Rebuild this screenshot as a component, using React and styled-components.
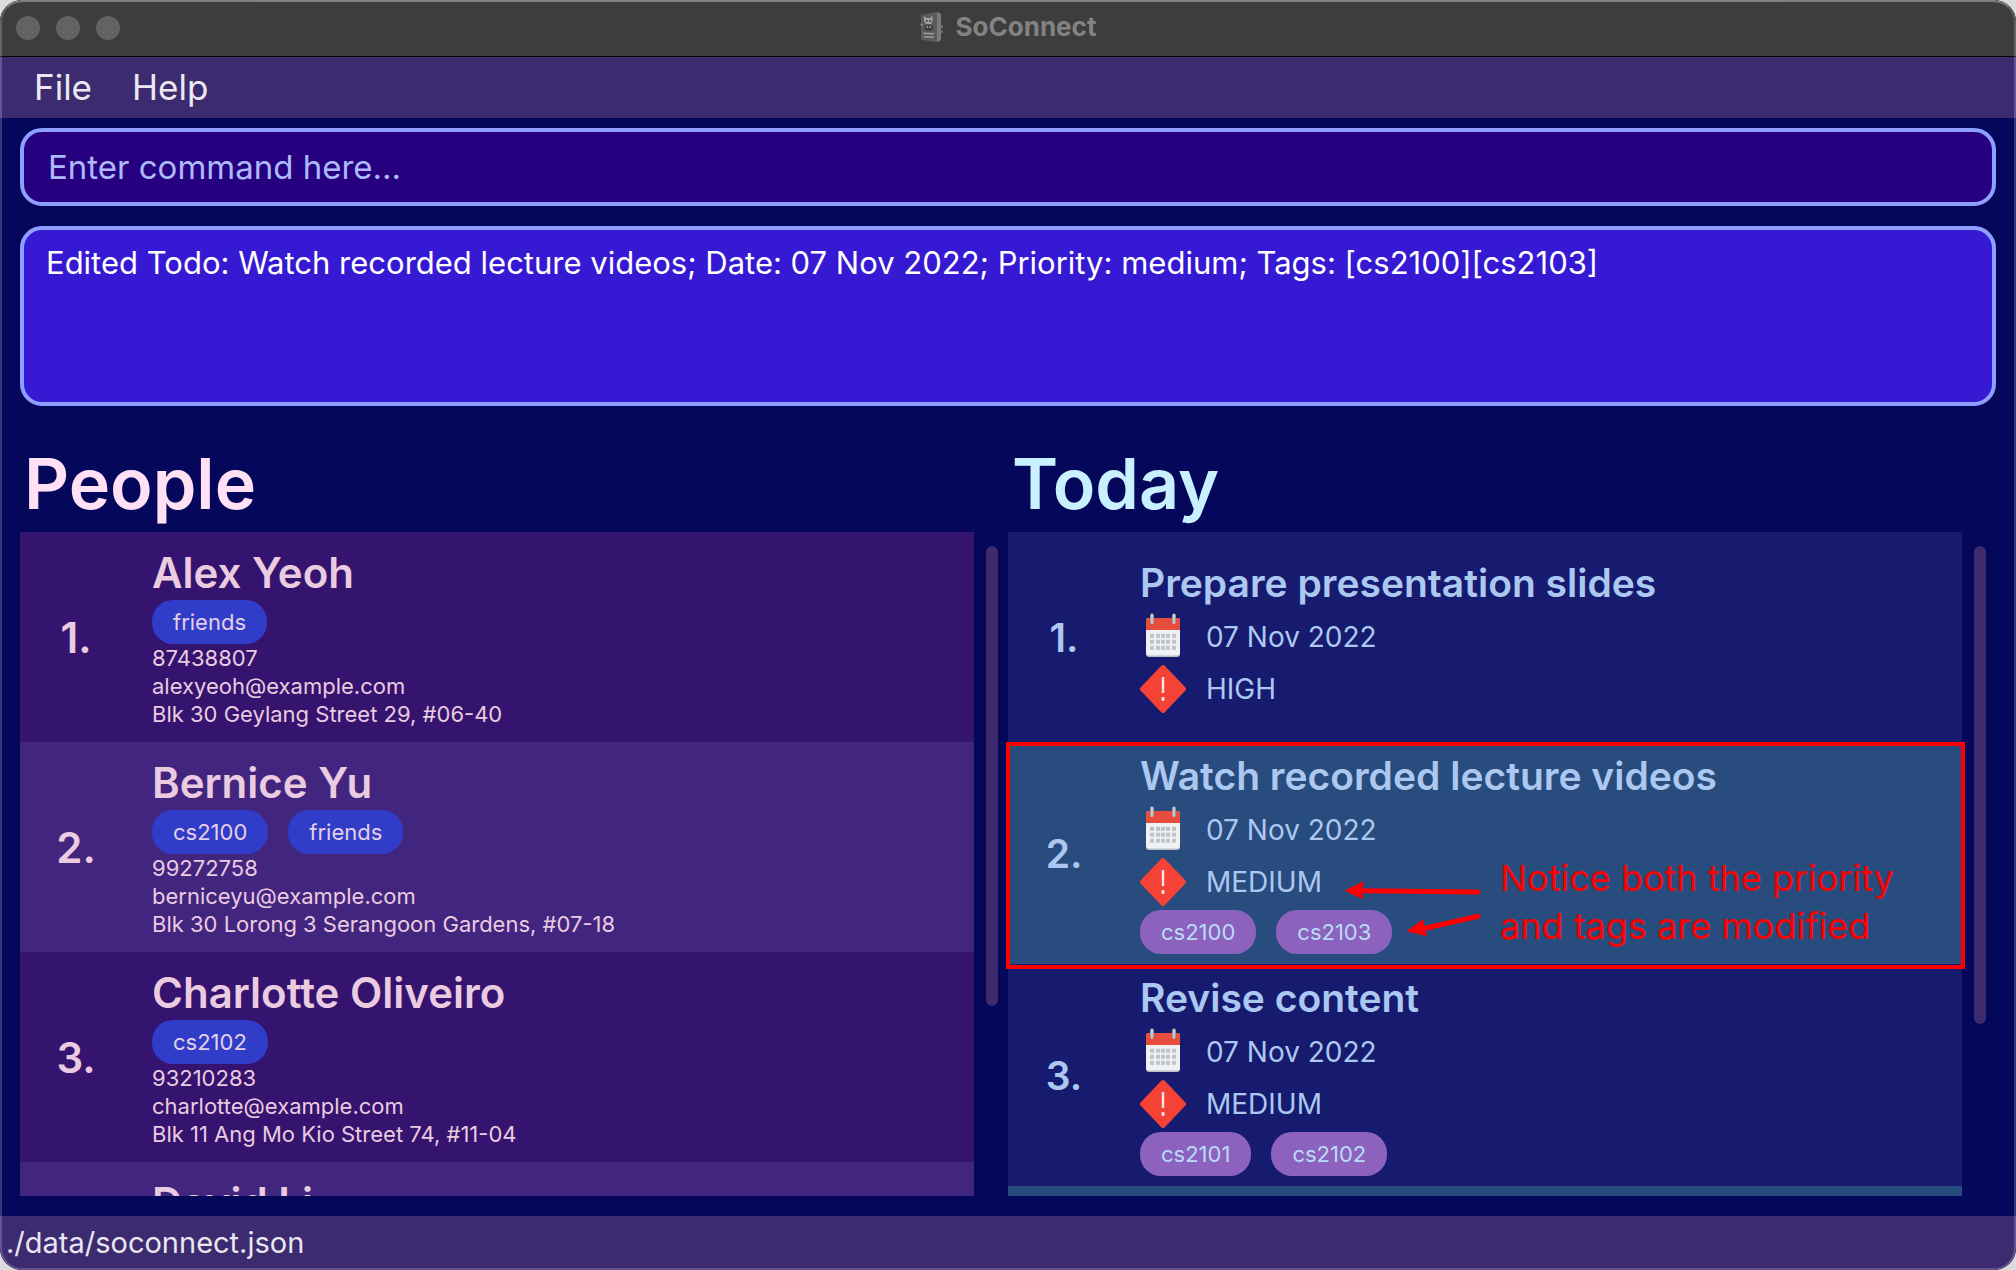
import React from 'react';
import styled, { createGlobalStyle } from 'styled-components';

const color = {
  night: '#04075a',
  bar: '#3c2b6e',
  titleBar: '#3d3d3d',
  edge: '#8f9fff',
  annotation: '#ff0000',
};

const themes = {
  people: {
    heading: '#ffe0f5',
    text: '#ebcbe0',
    odd: '#34146e',
    even: '#42257f',
    tag: '#303dc8',
    tagText: '#e6cfe8',
    titleSize: '42px',
  },
  tasks: {
    heading: '#c9f0ff',
    text: '#acc8f0',
    odd: '#161b70',
    even: '#284c7e',
    tag: '#8c62be',
    tagText: '#b8dcf6',
    titleSize: '39px',
  },
};

const GlobalStyle = createGlobalStyle`
  *, *::before, *::after { box-sizing: border-box; }
  body {
    margin: 0;
    overflow: hidden;
    background: #dcdcdc;
    font-family: Inter, "Liberation Sans", sans-serif;
  }
  button, input, textarea { font-family: inherit; }
`;

const Window = styled.div`
  position: relative;
  display: flex;
  flex-direction: column;
  height: 100vh;
  overflow: hidden;
  border-radius: 22px;
  background: ${color.night};

  &::after {
    content: '';
    position: absolute;
    inset: 0;
    border: 2px solid rgba(255, 255, 255, 0.2);
    border-top-color: rgba(255, 255, 255, 0.35);
    border-radius: 22px;
    pointer-events: none;
  }
`;

const TitleBar = styled.header`
  display: grid;
  grid-template-columns: 1fr auto 1fr;
  align-items: center;
  flex: none;
  height: 57px;
  padding: 0 16px;
  background: ${color.titleBar};
  border-bottom: 1px solid #000;
`;

const Lights = styled.div`
  display: flex;
  gap: 16px;
`;

const Light = styled.button`
  width: 24px;
  height: 24px;
  padding: 0;
  border: 0;
  border-radius: 50%;
  background: #636363;
`;

const AppName = styled.h1`
  display: flex;
  align-items: center;
  gap: 12px;
  margin: 0;
  padding-bottom: 2px;
  color: #838383;
  font-size: 26px;
  font-weight: 700;
  line-height: 32px;
`;

const MenuBar = styled.nav`
  display: flex;
  flex: none;
  height: 61px;
  padding-left: 14px;
  background: ${color.bar};
`;

const MenuItem = styled.button`
  padding: 0 20px 2px;
  border: 0;
  background: none;
  color: #ebe8f2;
  font-size: 35px;
`;

const Fields = styled.section`
  display: flex;
  flex-direction: column;
  flex: none;
  gap: 20px;
  padding: 10px 20px 0;
`;

const CommandInput = styled.input`
  width: 100%;
  height: 78px;
  padding: 0 24px;
  border: 4px solid ${color.edge};
  border-radius: 22px;
  outline: 0;
  background: #26007f;
  color: #fff;
  font-size: 33px;

  &::placeholder {
    color: #adb9fb;
    opacity: 1;
  }
`;

const ResultBox = styled.textarea`
  display: block;
  width: 100%;
  height: 180px;
  padding: 12px 22px;
  border: 4px solid ${color.edge};
  border-radius: 22px;
  outline: 0;
  resize: none;
  background: #3519d3;
  color: #fff;
  font-size: 31px;
  line-height: 42px;
`;

const Panels = styled.main`
  display: grid;
  grid-template-columns: 1fr 1fr;
  grid-template-rows: minmax(0, 1fr);
  flex: 1;
  gap: 10px;
  min-height: 0;
  padding: 38px 30px 20px 20px;
`;

const Panel = styled.section`
  display: flex;
  flex-direction: column;
  min-height: 0;
`;

const PanelHeading = styled.h2`
  flex: none;
  margin: 0;
  padding: 0 4px 8px;
  color: ${(p) => p.$theme.heading};
  font-size: 70px;
  font-weight: 600;
  line-height: 80px;
`;

const PanelBody = styled.div`
  display: flex;
  flex: 1;
  gap: 12px;
  min-height: 0;
`;

const List = styled.ol`
  flex: 1;
  min-width: 0;
  margin: 0;
  padding: 0;
  list-style: none;
  clip-path: inset(0 -8px 0 -8px);
`;

const ScrollTrack = styled.div`
  width: 12px;
  padding-top: 14px;
`;

const ScrollThumb = styled.div`
  height: ${(p) => p.$size};
  border-radius: 6px;
  background: ${color.bar};
`;

const Row = styled.li`
  position: relative;
  z-index: ${(p) => (p.$raised ? 1 : 0)};
  display: flex;
  align-items: ${(p) => (p.$top ? 'flex-start' : 'center')};
  min-height: 210px;
  background: ${(p) => p.$theme.odd};
  color: ${(p) => p.$theme.text};

  &:nth-child(even) {
    background: ${(p) => p.$theme.even};
  }
`;

const Index = styled.span`
  flex: none;
  width: 132px;
  padding-right: 20px;
  font-size: ${(p) => p.$theme.titleSize};
  font-weight: 600;
  text-align: center;
`;

const PersonInfo = styled.div`
  padding: 14px 0;
`;

const PersonName = styled.h3`
  margin: 0;
  font-size: 42px;
  font-weight: 600;
  line-height: 54px;
`;

const Detail = styled.p`
  margin: 0;
  font-size: 22px;
  line-height: 28px;
`;

const TaskInfo = styled.div`
  padding: 10px 0;
`;

const TaskTitle = styled.h3`
  margin: 0 0 4px;
  font-size: 39px;
  font-weight: 600;
  line-height: 48px;
`;

const Fact = styled.p`
  display: flex;
  align-items: center;
  gap: 20px;
  height: 52px;
  margin: 0;
  font-size: 28px;
`;

const Tags = styled.div`
  display: flex;
  gap: 20px;
  margin-top: ${(p) => (p.$spaced ? '2px' : '0')};
`;

const Tag = styled.span`
  height: 44px;
  padding: 0 21px;
  border-radius: 21px;
  background: ${(p) => p.$theme.tag};
  color: ${(p) => p.$theme.tagText};
  font-size: 22px;
  line-height: 44px;
`;

const Frame = styled.div`
  position: absolute;
  inset: 0 -3px -5px -2px;
  border: 4px solid ${color.annotation};
  pointer-events: none;
`;

const Arrows = styled.svg`
  position: absolute;
  top: 130px;
  left: 330px;
`;

const Note = styled.p`
  position: absolute;
  top: 112px;
  left: 492px;
  margin: 0;
  color: ${color.annotation};
  font-size: 36px;
  line-height: 48px;
  white-space: nowrap;
`;

const StatusBar = styled.footer`
  flex: none;
  height: 54px;
  padding-left: 6px;
  background: ${color.bar};
  color: #e9e7f3;
  font-size: 29px;
  line-height: 54px;
`;

function BookIcon() {
  return (
    <svg width="24" height="32" viewBox="0 0 24 32" aria-hidden="true">
      <path d="M1 4 L17 1 L21 3 V29 L17 31 L1 29 Z" fill="#5b5b5b" />
      <path d="M17 1 L21 3 V29 L17 31 Z" fill="#7a7a7a" />
      <path d="M21 14 h2 v3 h-2 Z M21 19 h2 v3 h-2 Z" fill="#666" />
      <path d="M4 5 L6.500 7 H10 L12.500 4.500 V10 L11 13 H6 L4 10.500 Z" fill="#a0a0a0" />
      <path d="M6 9 h1.500 v2 H6 Z M9.500 9 H11 v2 H9.500 Z" fill="#3b3b3b" />
      <path d="M5 14 h7 l1.500 3 -2 3 H6 l-2 -3 Z" fill="#404040" />
      <path d="M6.500 15 h1.500 v2 H6.500 Z M9.500 15 H11 v2 H9.500 Z M1 12 l2 2 -1 1 -1.500 -1 Z" fill="#949494" />
      <path d="M3 21.500 L14 22 V23.500 L3 23 Z M4 25 L14 25.500 V27 L4 26.500 Z" fill="#9a9a9a" />
    </svg>
  );
}

function CalendarIcon() {
  return (
    <svg width="46" height="48" viewBox="0 0 46 48" aria-hidden="true">
      <defs>
        <linearGradient id="ring" x1="0" x2="1">
          <stop offset="0" stopColor="#8d8f92" />
          <stop offset="0.5" stopColor="#d9dadc" />
          <stop offset="1" stopColor="#85878a" />
        </linearGradient>
      </defs>
      <rect x="6" y="6" width="34" height="38" rx="3" fill="#b9bec6" />
      <rect x="6" y="5" width="34" height="37.500" rx="3" fill="#eff1f3" />
      <path d="M6 17 V8 a3 3 0 0 1 3 -3 H37 a3 3 0 0 1 3 3 V17 Z" fill="#e74c3c" />
      {[22.8, 28.8, 34.8].map((y) =>
        [12, 18, 23, 28, 34].map((x) => (
          <rect key={`${x}-${y}`} x={x - 2} y={y - 2} width="4" height="4" fill="#c0c4c9" />
        ))
      )}
      <rect x="10" y="0.500" width="4" height="10.500" rx="2" fill="url(#ring)" />
      <rect x="32" y="0.500" width="4" height="10.500" rx="2" fill="url(#ring)" />
    </svg>
  );
}

function PriorityIcon() {
  return (
    <svg width="46" height="48" viewBox="0 0 46 48" aria-hidden="true">
      <path d="M21.500 0.600 Q23 -0.600 24.500 0.600 L45.500 22.500 Q46.500 24 45.500 25.500 L24.500 47.400 Q23 48.600 21.500 47.400 L0.500 25.500 Q-0.500 24 0.500 22.500 Z" fill="#f44336" />
      <rect x="21.800" y="12" width="2.400" height="16" fill="#ffe4e0" />
      <rect x="21.500" y="32" width="3" height="4" rx="1" fill="#ffe4e0" />
    </svg>
  );
}

function Annotation() {
  return (
    <>
      <Frame />
      <Arrows width="150" height="74" viewBox="0 0 150 74" aria-hidden="true">
        <g fill={color.annotation} stroke={color.annotation}>
          <path d="M22 18.800 L140 20" strokeWidth="5" strokeLinecap="round" />
          <path d="M7.500 18.500 L25.500 10 L23 18.800 L25 26.700 Z" strokeWidth="1" />
          <path d="M86 56.500 L140 44.300" strokeWidth="5" strokeLinecap="round" />
          <path d="M69.500 59 L85 48 L86 56.500 L88.500 63.700 Z" strokeWidth="1" />
        </g>
      </Arrows>
      <Note>
        Notice both the priority
        <br />
        and tags are modified
      </Note>
    </>
  );
}

const people = [
  {
    name: 'Alex Yeoh',
    tags: ['friends'],
    details: ['87438807', 'alexyeoh@example.com', 'Blk 30 Geylang Street 29, #06-40'],
  },
  {
    name: 'Bernice Yu',
    tags: ['cs2100', 'friends'],
    details: ['99272758', 'berniceyu@example.com', 'Blk 30 Lorong 3 Serangoon Gardens, #07-18'],
  },
  {
    name: 'Charlotte Oliveiro',
    tags: ['cs2102'],
    details: ['93210283', 'charlotte@example.com', 'Blk 11 Ang Mo Kio Street 74, #11-04'],
  },
];

const tasks = [
  { title: 'Prepare presentation slides', date: '07 Nov 2022', priority: 'HIGH', tags: [] },
  {
    title: 'Watch recorded lecture videos',
    date: '07 Nov 2022',
    priority: 'MEDIUM',
    tags: ['cs2100', 'cs2103'],
    annotated: true,
  },
  { title: 'Revise content', date: '07 Nov 2022', priority: 'MEDIUM', tags: ['cs2101', 'cs2102'] },
];

function TagList({ tags, theme, spaced }) {
  return (
    <Tags $spaced={spaced}>
      {tags.map((tag) => (
        <Tag key={tag} $theme={theme}>
          {tag}
        </Tag>
      ))}
    </Tags>
  );
}

function ListPanel({ title, theme, thumb, children }) {
  return (
    <Panel>
      <PanelHeading $theme={theme}>{title}</PanelHeading>
      <PanelBody>
        <List>{children}</List>
        <ScrollTrack aria-hidden="true">
          <ScrollThumb $size={thumb} />
        </ScrollTrack>
      </PanelBody>
    </Panel>
  );
}

export default function App() {
  return (
    <>
      <GlobalStyle />
      <Window>
        <TitleBar>
          <Lights>
            <Light aria-label="Close" />
            <Light aria-label="Minimise" />
            <Light aria-label="Zoom" />
          </Lights>
          <AppName>
            <BookIcon />
            SoConnect
          </AppName>
        </TitleBar>
        <MenuBar>
          <MenuItem>File</MenuItem>
          <MenuItem>Help</MenuItem>
        </MenuBar>
        <Fields>
          <CommandInput type="text" aria-label="Command" placeholder="Enter command here..." />
          <ResultBox
            readOnly
            aria-label="Result"
            value="Edited Todo: Watch recorded lecture videos; Date: 07 Nov 2022; Priority: medium; Tags: [cs2100][cs2103]"
          />
        </Fields>
        <Panels>
          <ListPanel title="People" theme={themes.people} thumb="460px">
            {people.map((person, i) => (
              <Row key={person.name} $theme={themes.people}>
                <Index $theme={themes.people}>{i + 1}.</Index>
                <PersonInfo>
                  <PersonName>{person.name}</PersonName>
                  <TagList tags={person.tags} theme={themes.people} />
                  {person.details.map((line) => (
                    <Detail key={line}>{line}</Detail>
                  ))}
                </PersonInfo>
              </Row>
            ))}
            <Row $theme={themes.people} $top>
              <Index $theme={themes.people} />
              <PersonInfo>
                <PersonName>David Li</PersonName>
              </PersonInfo>
            </Row>
          </ListPanel>
          <ListPanel title="Today" theme={themes.tasks} thumb="478px">
            {tasks.map((task, i) => (
              <Row key={task.title} $theme={themes.tasks} $raised={task.annotated}>
                <Index $theme={themes.tasks}>{i + 1}.</Index>
                <TaskInfo>
                  <TaskTitle>{task.title}</TaskTitle>
                  <Fact>
                    <CalendarIcon />
                    {task.date}
                  </Fact>
                  <Fact>
                    <PriorityIcon />
                    {task.priority}
                  </Fact>
                  {task.tags.length > 0 && <TagList tags={task.tags} theme={themes.tasks} spaced />}
                </TaskInfo>
                {task.annotated && <Annotation />}
              </Row>
            ))}
            <Row $theme={themes.tasks} />
          </ListPanel>
        </Panels>
        <StatusBar>./data/soconnect.json</StatusBar>
      </Window>
    </>
  );
}
